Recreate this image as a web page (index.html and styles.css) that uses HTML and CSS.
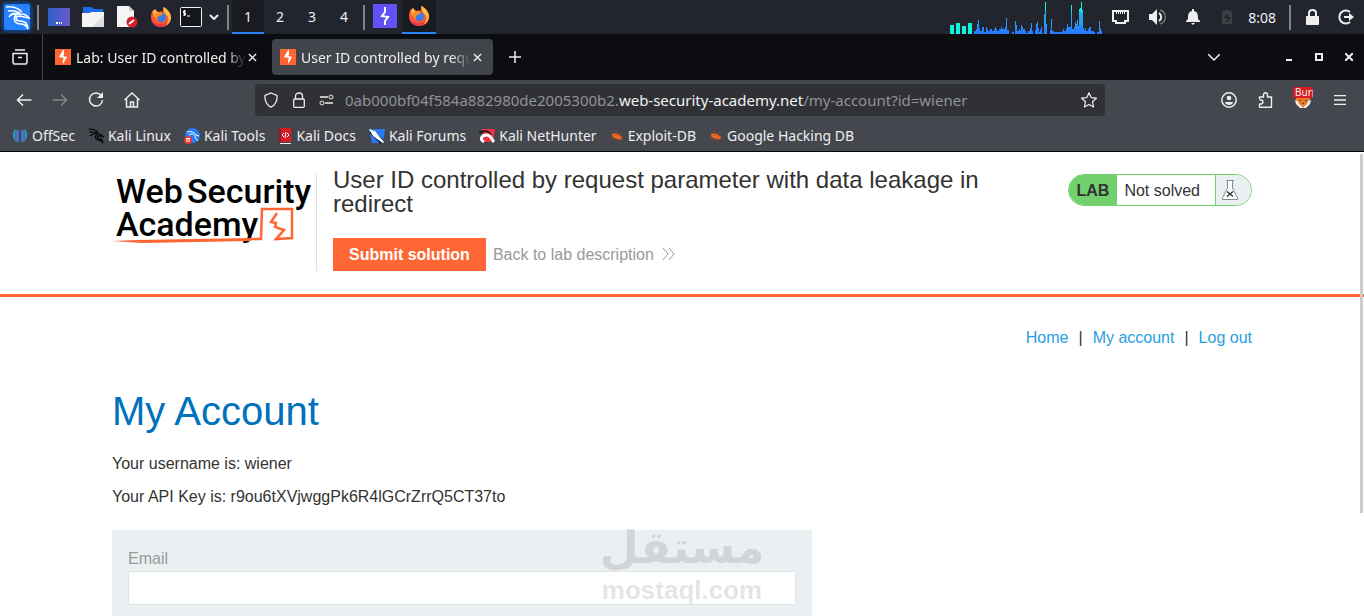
FILE: index.html
```
<!DOCTYPE html>
<html lang="en">
<head>
  <meta charset="UTF-8">
  <meta name="viewport" content="width=device-width, initial-scale=1.0">
  <title>User ID controlled by request parameter with data leakage in redirect</title>
  <link rel="stylesheet" href="styles.css">
</head>
<body>
  <!-- shared symbols -->
  <svg class="defs" width="0" height="0">
    <symbol id="firefox" viewBox="0 0 22 22">
      <path fill="#ff5a36" d="M1 11C1 8 2 5 3 4l1 2 1-3 3 3c3-1 4-1 5 0l1-5c5 3 7 7 7 11 0 6-5 9-10 9S1 17 1 11z"/>
      <path fill="#ffbd3e" d="M13 1c5 2 8 7 8 10 0 5-4 8-6 8 3-2 4-5 3-8-1-2-5-4-5-10zM3 5l2-2 2 3 3 1-3 2-3 2z"/>
      <path fill="#e83a48" d="M1 11c1 5 5 7 10 7 3 0 5-1 6-3 0 4-3 6-6 6-6 0-10-4-10-10z"/>
      <circle cx="11.500" cy="11.500" r="4.500" fill="#3d7be5"/>
      <path fill="#ff8a2b" d="M5 8c3-2 5-2 8 0l-3 2c-2 0-3 2-2 4-3-1-4-3-3-6z"/>
    </symbol>
    <symbol id="burp" viewBox="0 0 16 16">
      <path fill="#ff6633" d="M0 0h16v16H0z"/>
      <path fill="#fff" d="M9 1v5l-1 1 4 1-4 7v-4l1-2-5-1 4-7z"/>
    </symbol>
    <symbol id="dragon" viewBox="0 0 24 24">
      <path fill="none" stroke="currentColor" stroke-width="2" d="M1 2c6-1 11 1 14 5M2 6c5-1 8 0 12 2M3 12c3-4 7-4 12-3 4 0 6 2 8 4l-5-1c-4-1-6 3-1 4 4 0 5 3 5 7-1-4-3-5-6-5-6-1-6-5-3-8"/>
    </symbol>
    <symbol id="bug" viewBox="0 0 16 16">
      <path stroke="#9b4326" fill="none" d="M2 3l3 3M6 2l2 3M1 8h4M3 13l3-3M9 14l1-3M14 13l-2-2M12 4l-1 2M13 8l2 1"/>
      <path fill="#f26a21" d="M2 6l3-1 5 1 4 4-2 2-5-1-4-2z"/>
      <path stroke="#a03c14" d="M5 7l1 1M8 7l1 1M9 9l1 1"/>
    </symbol>
    <symbol id="close" viewBox="0 0 10 10"><path fill="none" stroke="#eee" stroke-width="1.500" d="M1 1l8 8M9 1L1 9"/></symbol>
  </svg>

  <header class="panel">
    <button class="kali" aria-label="Applications"><svg width="32" height="32" viewBox="0 0 32 32"><rect width="32" height="32" rx="7" fill="#143a6b"/><rect x="3" y="3" width="26" height="26" rx="2" fill="#2681ff"/><path fill="none" stroke="#fff" stroke-width="1.600" d="M5 6c6-1 12 1 16 5M7 10c5-1 8 0 12 2M8 16c2-4 6-4 12-3 4 0 6 1 8 4l-5-1-4-1c-5 0-5 5 0 5 6 0 7 3 8 8-2-4-4-5-7-5-8 0-8-7-4-10"/></svg></button>
    <span class="sep"></span>
    <button class="launcher" aria-label="Show desktop"><svg width="22" height="18" viewBox="0 0 22 18"><defs><linearGradient id="desk"><stop stop-color="#2f62c9"/><stop offset="1" stop-color="#6a58cc"/></linearGradient></defs><path fill="url(#desk)" d="M0 0h22v18H0z"/><path stroke="#fff" stroke-width="2" d="M8 15h2M11 15h1M13 15h1"/></svg></button>
    <button class="launcher" aria-label="Files"><svg width="22" height="20" viewBox="0 0 22 20"><path fill="#1d6bea" d="M1 0h8l3 2h9v9H1z"/><path fill="#f4f4f4" d="M0 6h7l3-1h12v15H0z"/><path fill="#dedede" d="M22 8v12H10z"/></svg></button>
    <button class="launcher" aria-label="Text editor"><svg width="22" height="22" viewBox="0 0 22 22"><path fill="#f5f5f5" d="M1 0h12l5 5v16H1z"/><path fill="#ccc" d="M13 0v5h5z"/><circle cx="16" cy="16" r="5.500" fill="#d51e2b"/><path stroke="#fff" stroke-width="2" d="M13 18l5-4"/></svg></button>
    <button class="launcher" aria-label="Firefox"><svg width="22" height="22"><use href="#firefox"/></svg></button>
    <button class="terminal" aria-label="Terminal"><svg width="22" height="20" viewBox="0 0 22 20"><rect x="0.500" y="0.500" width="21" height="19" rx="1" fill="#14161a" stroke="#f2f2f2"/><path fill="none" stroke="#fff" d="M6 4H3.500v2H5.500v2H3M4.500 3v6M7 9h3"/></svg></button>
    <button class="term-menu" aria-label="Terminal menu"><svg width="10" height="6" viewBox="0 0 10 6"><path fill="none" stroke="#eee" stroke-width="2" d="M1 1l4 4 4-4"/></svg></button>
    <span class="sep"></span>
    <nav class="spaces">
      <button class="active">1</button>
      <button>2</button>
      <button>3</button>
      <button>4</button>
    </nav>
    <span class="sep"></span>
    <button class="task" aria-label="Burp Suite"><svg width="24" height="24" viewBox="0 0 24 24"><path fill="#6152f6" d="M0 0h24v24H0z"/><path fill="none" stroke="#fff" stroke-width="2" d="M12 3v5l-3 4 6 1-3 4v4"/></svg></button>
    <button class="task active" aria-label="Firefox window"><svg width="22" height="22"><use href="#firefox"/></svg></button>

    <div class="tray">
      <svg class="load" width="152" height="34" viewBox="0 0 152 34">
        <defs><linearGradient id="cpu" gradientUnits="userSpaceOnUse" x1="0" y1="0" x2="0" y2="34"><stop offset=".28" stop-color="#14f5df"/><stop offset=".4" stop-color="#27a9ee"/><stop offset=".75" stop-color="#2798f5"/><stop offset=".85" stop-color="#277fff"/></linearGradient></defs>
        <path fill="#0df5dc" d="M0 25h4v9H0zM6 23h4v11H6zM12 26h4v8h-4zM18 23h4v11h-4z"/>
        <path fill="url(#cpu)" d="M24 34v-3h2v-2h1v-5h1v-4h1v8h1v3h2v-4h2v5h2v-5h1v2h1v2h2v-2h2v2h2v-2h1v-2h1v2h1v2h2v-2h2v-2h1v2h3v-2h1v-9h1v12h2v4h3v-2h2v2h1V21h1v4h1v6h2v-2h1v2h1v-6h1v2h1v2h2v2h1v2h2v-2h2v-3h1v-5h1v8h1v3h2v-4h1v-6h1v-2h1v6h1v4h1v-2h1v-3h1v6h1v2h1V14h1V2h1v22h1v10h3v-4h1V19h1v12h2v1h8v-1h1v-2h1v2h2v-3h1v-4h1v3h3V5h1v24h2v-2h1v-5h1v2h1v-4h1v6h1v-17h1V8h1V2h1v8h1v18h1v2h1v-2h1v3h2v-2h1v-2h2v4h3v1h1v2h2v-2h2V21h1v7h1v3h2v-7h1v10z"/>
      </svg>
      <svg class="net" width="17" height="14" viewBox="0 0 17 14"><path fill="none" stroke="#eee" stroke-width="2" d="M1 1h15v10h-3v2H4v-2H1z"/><path stroke="#eee" d="M4.500 2v2M6.500 2v2M8.500 2v2M10.500 2v2M12.500 2v2"/></svg>
      <svg class="vol" width="18" height="16" viewBox="0 0 18 16"><path fill="#eee" d="M0 5h3l5-5v16l-5-5H0z"/><path fill="none" stroke="#eee" stroke-width="2" d="M10 4c3 2 3 6 0 8"/><path fill="none" stroke="#72757b" stroke-width="1.500" d="M11 1c7 2 7 12 0 14"/></svg>
      <svg class="bell" width="14" height="16" viewBox="0 0 14 16"><path fill="#eee" d="M6 0h2v2c4 1 4 4 4 8l2 2v1H0v-1l2-2c0-4 0-7 4-8zM5 14h4l-2 2z"/></svg>
      <svg class="battery" width="10" height="14" viewBox="0 0 10 14"><path fill="#3b3f43" d="M3 0h4v1h3v13H0V1h3z"/><path fill="#202329" d="M6 3L2 8h3v4l4-5H6z"/></svg>
      <time>8:08</time>
      <span class="sep"></span>
      <button class="lock" aria-label="Lock"><svg width="13" height="16" viewBox="0 0 13 16"><path fill="none" stroke="#eee" stroke-width="2" d="M3 8V4c0-4 7-4 7 0v4"/><rect y="7" width="13" height="9" rx="1" fill="#eee"/></svg></button>
      <button class="exit" aria-label="Log out"><svg width="16" height="16" viewBox="0 0 16 16"><path fill="none" stroke="#eee" stroke-width="2" d="M12 3a6.500 6.500 0 1 0 0 10"/><path fill="#eee" d="M6 7h5V4l5 4-5 4V9H6z"/></svg></button>
    </div>
  </header>

  <div class="tabbar">
    <button class="tabview" aria-label="Firefox View"><svg width="16" height="16" viewBox="0 0 16 16"><path fill="none" stroke="#eee" stroke-width="1.500" d="M3 1h10M1 4.500h14v9l-1 1.500H2l-1-1.500zM6 8.500h4"/></svg></button>
    <div class="tab">
      <svg width="16" height="16"><use href="#burp"/></svg>
      <span>Lab: User ID controlled by</span>
      <button aria-label="Close tab"><svg width="9" height="9"><use href="#close"/></svg></button>
    </div>
    <div class="tab current">
      <svg width="16" height="16"><use href="#burp"/></svg>
      <span>User ID controlled by request</span>
      <button aria-label="Close tab"><svg width="9" height="9"><use href="#close"/></svg></button>
    </div>
    <button class="newtab" aria-label="New tab"><svg width="12" height="12" viewBox="0 0 12 12"><path stroke="#eee" stroke-width="1.500" d="M6 0v12M0 6h12"/></svg></button>
    <div class="window">
      <button class="alltabs" aria-label="All tabs"><svg width="12" height="7" viewBox="0 0 12 7"><path fill="none" stroke="#eee" stroke-width="1.500" d="M0 0l6 6 6-6"/></svg></button>
      <button aria-label="Minimize"><svg width="8" height="8" viewBox="0 0 8 8"><path fill="#eee" d="M1 6h6v2H1z"/></svg></button>
      <button aria-label="Maximize"><svg width="8" height="8" viewBox="0 0 8 8"><path fill="none" stroke="#eee" stroke-width="2" d="M1 1h6v6H1z"/></svg></button>
      <button aria-label="Close"><svg width="8" height="8" viewBox="0 0 8 8"><path stroke="#eee" stroke-width="2" d="M0 0l8 8M8 0L0 8"/></svg></button>
    </div>
  </div>

  <div class="toolbar">
    <div class="history">
      <button aria-label="Back"><svg width="16" height="16" viewBox="0 0 16 16"><path fill="none" stroke="#eee" stroke-width="1.500" d="M15.500 8H2M7 2.500L1.500 8 7 13.500"/></svg></button>
      <button aria-label="Forward" disabled><svg width="16" height="16" viewBox="0 0 16 16"><path fill="none" stroke="#85868b" stroke-width="1.500" d="M.5 8H14M9 2.500L14.500 8 9 13.500"/></svg></button>
      <button aria-label="Reload"><svg width="16" height="16" viewBox="0 0 16 16"><path fill="none" stroke="#eee" stroke-width="1.500" d="M13.500 4A6.500 6.500 0 1 0 14.500 8"/><path fill="#eee" d="M15 0v6H9z"/></svg></button>
      <button aria-label="Home"><svg width="16" height="16" viewBox="0 0 16 16"><path fill="none" stroke="#eee" stroke-width="1.500" d="M.5 8L8 1l7.500 7M2.500 7v8h11V7M6.500 15v-5h3v5"/></svg></button>
    </div>
    <div class="urlbar">
      <svg width="16" height="16" viewBox="0 0 16 16"><path fill="none" stroke="#eee" stroke-width="1.300" d="M8 1l6 2.500C14.500 9 12 13 8 15.300 4 13 1.500 9 2 3.500z"/></svg>
      <svg width="16" height="16" viewBox="0 0 16 16"><path fill="none" stroke="#eee" stroke-width="1.300" d="M4.500 7V4c0-4 7-4 7 0v3"/><rect x="2.700" y="7" width="10.600" height="8.300" rx="1" fill="none" stroke="#eee" stroke-width="1.300"/></svg>
      <svg width="16" height="16" viewBox="0 0 16 16"><path fill="none" stroke="#eee" stroke-width="1.300" d="M1 5h8M6 11h8"/><circle cx="12" cy="5" r="2" fill="none" stroke="#eee"/><circle cx="3" cy="11" r="2" fill="none" stroke="#eee"/></svg>
      <p class="address">0ab000bf04f584a882980de2005300b2.<b>web-security-academy.net</b>/my-account?id=wiener</p>
      <button aria-label="Bookmark this page"><svg width="16" height="16" viewBox="0 0 16 16"><path fill="none" stroke="#eee" stroke-width="1.200" stroke-linejoin="round" d="M8 .8l2.200 4.800 5.200.6-3.900 3.500 1.100 5.300L8 12.400 3.400 15l1.100-5.300L.6 6.200l5.200-.6z"/></svg></button>
    </div>
    <div class="actions">
      <button aria-label="Account"><svg width="16" height="16" viewBox="0 0 16 16"><circle cx="8" cy="8" r="7.200" fill="none" stroke="#eee" stroke-width="1.500"/><circle cx="8" cy="6" r="2.300" fill="#eee"/><path fill="#eee" d="M4 10h8c0 2-2 3-4 3s-4-1-4-3z"/></svg></button>
      <button aria-label="Extensions"><svg width="16" height="16" viewBox="0 0 16 16"><path fill="none" stroke="#eee" stroke-width="1.400" stroke-linejoin="round" d="M1.500 7V5H5.500V3c0-3 4-3 4 0v2h4v10.300h-12V12H3c2.500 0 2.500-4 0-4H1.500"/></svg></button>
      <button class="foxy" aria-label="FoxyProxy"><svg width="16" height="16" viewBox="0 0 16 16"><path fill="#ee7b24" d="M1 2h14v8l-3 4-4 2-4-2-3-4z"/><path fill="#eee" d="M0 8l3 1 1 3 3 2h2l3-2 1-3 3-1-1 4-4 4H5l-4-4z"/><path fill="#ee7b24" d="M6 13h4l-2 3z"/><path fill="#68422d" d="M4 8h2v1H4zM10 8h2v1h-2zM7 11h2v1H7z"/></svg><span>Burp</span></button>
      <button aria-label="Menu"><svg width="12" height="10" viewBox="0 0 12 10"><path stroke="#eee" stroke-width="1.300" d="M0 .7h12M0 5h12M0 9.300h12"/></svg></button>
    </div>
  </div>

  <nav class="bookmarks">
    <a href="#"><svg width="16" height="16" viewBox="0 0 16 16"><path fill="#2f9bd0" d="M4 1C0 3 0 10 4 14c-1-4-1-9 0-13zM12 1c4 2 4 9 0 13 1-4 1-9 0-13z"/><path fill="#4c73ca" d="M5 1l2 2v10l-2 2C3 11 3 5 5 1zM11 1L9 3v10l2 2c2-4 2-10 0-14z"/></svg>OffSec</a>
    <a href="#"><svg class="black" width="16" height="16"><use href="#dragon"/></svg>Kali Linux</a>
    <a href="#"><svg width="16" height="16" viewBox="0 0 16 16"><circle cx="8.500" cy="7.500" r="7.500" fill="#267df5"/><path fill="none" stroke="#fff" d="M3 4c4-1 7 0 9 3l3 1M5 7c3-2 5-1 6 1 0 3 2 3 3 5"/><circle cx="4" cy="12" r="4" fill="#ef3a32"/><path stroke="#fff" d="M2 10.500h4M3 11v3M5 11v3"/></svg>Kali Tools</a>
    <a href="#"><svg width="14" height="16" viewBox="0 0 14 16"><path fill="#d91c24" d="M2 0h11v14H2z"/><path fill="#921c2a" d="M1 1h2v14H1z"/><path fill="#eee" d="M2 15h11v1H2z"/><path fill="none" stroke="#fff" d="M6 5L4 7l2 2M9 5l2 2-2 2M8 4L7 10"/></svg>Kali Docs</a>
    <a href="#"><svg width="16" height="16" viewBox="0 0 16 16"><path fill="#267df5" d="M0 1h16l-2 14H3z"/><path stroke="#152035" stroke-width="5" d="M2 3l11 11"/><path fill="#fff" d="M0 1l6 2 4 5 5 6-1 1-6-4-4-3z"/></svg>Kali Forums</a>
    <a href="#"><svg width="16" height="16" viewBox="0 0 16 16"><path fill="#ef333b" d="M3 1h13l-2 13H5z"/><path fill="none" stroke="#18191f" stroke-width="2" d="M0 5c7-4 10-1 12 2"/><path fill="none" stroke="#fff" stroke-width="3" d="M5 14c-5-3-2-7 3-7 4 0 4 4 7 7"/></svg>Kali NetHunter</a>
    <a href="#"><svg width="14" height="16" viewBox="0 0 16 16"><use href="#bug"/></svg>Exploit-DB</a>
    <a href="#"><svg width="14" height="16" viewBox="0 0 16 16"><use href="#bug"/></svg>Google Hacking DB</a>
  </nav>

  <main class="page">
    <section class="lab-header">
      <div class="container">
        <a class="logo" href="#" aria-label="Web Security Academy">
          <svg width="204" height="80" viewBox="0 0 204 80">
            <text x="4" y="29">Web</text>
            <text x="75" y="29">Security</text>
            <text x="4" y="62">Academy</text>
            <path fill="#ff6633" d="M0 67l25-1 114-2v3L30 69z"/>
            <path fill="none" stroke="#ff6633" stroke-width="2.500" d="M138 65h11l1-30h30v29l-16 1 8-9-9-3 1-4-5-1 6-9"/>
          </svg>
        </a>
        <div class="lab-title">
          <h2>User ID controlled by request parameter with data leakage in redirect</h2>
          <div class="lab-actions">
            <button>Submit solution</button>
            <a href="#">Back to lab description <svg width="13" height="12" viewBox="0 0 13 12"><path fill="none" stroke="#999" d="M1 0l5 6-5 6M7 0l5 6-5 6"/></svg></a>
          </div>
        </div>
        <div class="lab-status">
          <strong>LAB</strong>
          <span>Not solved</span>
          <i><svg width="16" height="20" viewBox="0 0 16 20"><path fill="#fff" stroke="#888" d="M5.500 1v7L.5 18v1.500h15V18l-5-10V1M4 .5h8"/><path stroke="#333" stroke-width="1.500" d="M5 11.500l6 5M11 11.500l-6 5"/></svg></i>
        </div>
      </div>
    </section>

    <section class="container account">
      <nav class="links"><a href="#">Home</a><span>|</span><a href="#">My account</a><span>|</span><a href="#">Log out</a></nav>
      <h1>My Account</h1>
      <p>Your username is: wiener</p>
      <p>Your API Key is: r9ou6tXVjwggPk6R4lGCrZrrQ5CT37to</p>
      <form>
        <label for="email">Email</label>
        <input type="email" id="email">
        <div class="watermark"><span lang="ar" dir="rtl">مستقل</span><b>mostaql.com</b></div>
      </form>
    </section>
    <div class="scrollbar"></div>
  </main>
</body>
</html>
```
FILE: styles.css
```
* {
  box-sizing: border-box;
}
body {
  margin: 0;
  height: 100vh;
  overflow: hidden;
  display: flex;
  flex-direction: column;
  font-family: "Noto Sans", sans-serif;
  font-size: 14px;
  color: #eee;
}
button {
  font: inherit;
  color: inherit;
  background: none;
  border: none;
  padding: 0;
  display: flex;
  align-items: center;
  justify-content: center;
}
a {
  text-decoration: none;
  color: inherit;
}
p {
  margin: 0;
}
svg {
  flex: none;
}
.defs {
  position: absolute;
}

/* desktop panel */
.panel {
  height: 34px;
  flex: none;
  display: flex;
  align-items: center;
  background: #23252e;
}
.kali {
  width: 34px;
}
.sep {
  width: 2px;
  height: 25px;
  margin: 0 3px;
  background: #84858b;
}
.launcher {
  width: 34px;
  flex: none;
}
.terminal {
  width: 26px;
}
.term-menu {
  width: 20px;
}
.spaces {
  display: flex;
}
.spaces button {
  width: 32px;
  height: 34px;
  border-bottom: 2px solid transparent;
}
.spaces .active, .task.active {
  background: #191b20;
  border-bottom: 2px solid #2681ff;
}
.task {
  width: 34px;
  height: 34px;
  border-bottom: 2px solid transparent;
}
.tray {
  margin-left: auto;
  display: flex;
  align-items: center;
  padding-right: 10px;
}
.net {
  margin-left: 10px;
}
.vol {
  margin-left: 20px;
}
.bell {
  margin-left: 19px;
}
.battery {
  margin: 0 16px 0 22px;
}
.tray .sep {
  margin: 0 15px 0 13px;
}
.exit {
  margin-left: 19px;
}

/* tabs */
.tabbar {
  height: 46px;
  flex: none;
  display: flex;
  align-items: center;
  background: #0c0d11;
}
.tabview {
  width: 43px;
  height: 46px;
  padding-right: 2px;
  margin-right: 4px;
  border-right: 1px solid #46474c;
  flex: none;
}
.tab {
  width: 221px;
  height: 36px;
  display: flex;
  align-items: center;
  padding: 0 11px 0 8px;
  border-radius: 4px;
}
.tab + .tab {
  margin-left: 4px;
}
.tab.current {
  background: #42444c;
}
.tab span {
  flex: 1;
  margin: 0 2px 0 5px;
  overflow: hidden;
  white-space: nowrap;
  mask-image: linear-gradient(to left, transparent, #000 20px);
}
.newtab {
  width: 44px;
}
.window {
  margin-left: auto;
  display: flex;
  align-items: center;
}
.window button {
  width: 30px;
}
.window .alltabs {
  margin-right: 45px;
}

/* navigation */
.toolbar {
  height: 40px;
  flex: none;
  display: flex;
  align-items: center;
  background: #45474f;
}
.history {
  display: flex;
  width: 255px;
  padding-left: 6px;
}
.history button {
  width: 36px;
}
.urlbar {
  flex: 1;
  height: 32px;
  display: flex;
  align-items: center;
  gap: 12px;
  padding: 0 8px;
  border-radius: 4px;
  background: #303135;
}
.address {
  flex: 1;
  margin-left: -2px;
  font-size: 15px;
  color: #919298;
}
.address b {
  font-weight: 400;
  color: #f2f2f2;
}
.actions {
  width: 259px;
  display: flex;
  justify-content: flex-end;
  padding-right: 6px;
}
.actions button {
  width: 37px;
  height: 32px;
  position: relative;
}
.foxy span {
  position: absolute;
  top: 3px;
  left: 9px;
  width: 20px;
  height: 11px;
  overflow: hidden;
  padding-left: 2px;
  border-radius: 2px;
  background: #d91c24;
  font-size: 10px;
  line-height: 11px;
  text-align: left;
}
.bookmarks {
  height: 32px;
  flex: none;
  display: flex;
  align-items: center;
  gap: 13px;
  padding: 0 12px;
  background: #45474f;
  border-bottom: 1px solid #08080b;
}
.bookmarks a {
  display: flex;
  align-items: center;
  gap: 4px;
  white-space: nowrap;
}
.black {
  color: #08090b;
}

/* page */
.page {
  flex: 1;
  min-height: 0;
  overflow: hidden;
  position: relative;
  background: #fff;
  color: #333332;
  font-family: "Liberation Sans", Arial, sans-serif;
  font-size: 16px;
}
.container {
  max-width: 1140px;
  margin: 0 auto;
}
.lab-header {
  padding: 16px 0 23px;
  border-bottom: 3px solid #ff6633;
}
.lab-header .container {
  display: flex;
  align-items: flex-start;
}
.logo {
  width: 205px;
  height: 97px;
  margin-top: 6px;
  border-right: 1px solid #e0e0e0;
}
.logo text {
  font-family: Roboto, sans-serif;
  font-size: 34px;
  font-weight: 500;
  fill: #000;
}
.lab-title {
  width: 670px;
  padding-left: 16px;
}
.lab-title h2 {
  margin: 0 0 22px;
  font-size: 24px;
  line-height: 24px;
  font-weight: 400;
}
.lab-actions {
  display: flex;
  align-items: center;
  gap: 7px;
  color: #999;
}
.lab-actions button {
  height: 33px;
  padding: 0 16px;
  background: #ff6633;
  color: #fff;
  font-weight: 700;
}
.lab-actions svg {
  margin-left: 4px;
}
.lab-status {
  margin: 6px 0 0 auto;
  height: 32px;
  display: flex;
  border: 1px solid #70d16d;
  border-radius: 16px;
  overflow: hidden;
  line-height: 32px;
}
.lab-status strong {
  padding: 0 8px;
  background: #70d16d;
}
.lab-status span {
  padding: 0 15px 0 7px;
}
.lab-status i {
  width: 36px;
  padding-left: 6px;
  display: flex;
  align-items: center;
  border-left: 1px solid #70d16d;
  background: #eaeff2;
}
.links {
  display: flex;
  justify-content: flex-end;
  gap: 10px;
  padding-top: 31px;
  line-height: 20px;
}
.links a {
  color: #29a0e0;
}
.account h1 {
  margin: 39px 0 19px;
  font-size: 40px;
  line-height: 48px;
  font-weight: 400;
  color: #0071bc;
}
.account p {
  margin-bottom: 13px;
  line-height: 20px;
}
.account form {
  position: relative;
  max-width: 700px;
  height: 180px;
  margin-top: 23px;
  padding: 19px 16px;
  background: #eaeff2;
}
.account label {
  display: block;
  line-height: 20px;
  margin-bottom: 2px;
  color: #999;
}
.account input {
  width: 100%;
  height: 34px;
  border: 1px solid #e0e3e5;
  background: #fff;
}
.watermark {
  position: absolute;
  top: -9px;
  right: 49px;
  width: 162px;
  display: flex;
  flex-direction: column;
  align-items: center;
  color: #000;
  opacity: 0.1;
  pointer-events: none;
}
.watermark span {
  font: bold 45px/54px "DejaVu Sans", sans-serif;
}
.watermark b {
  font-size: 26px;
  line-height: 30px;
}
.scrollbar {
  position: absolute;
  top: 2px;
  right: 1px;
  width: 3px;
  height: 359px;
  background: #ccc;
}
```
